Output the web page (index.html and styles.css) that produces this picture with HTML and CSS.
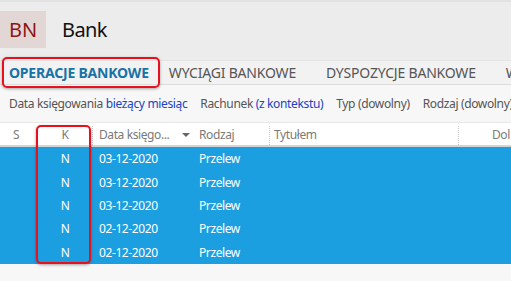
FILE: index.html
```html
<!DOCTYPE html>
<html lang="pl">
<head>
<meta charset="utf-8">
<link rel="stylesheet" href="styles.css">
</head>
<body>
<div class="app">
  <header class="titlebar">
    <div class="badge">BN</div>
    <div class="title">Bank</div>
  </header>
  <nav class="tabs">
    <div class="tab active">OPERACJE BANKOWE</div>
    <div class="tab">WYCIĄGI BANKOWE</div>
    <div class="tab">DYSPOZYCJE BANKOWE</div>
    <div class="tab">W</div>
  </nav>
  <div class="filters">
    <span class="f"><span class="lbl">Data księgowania</span> <span class="val">bieżący miesiąc</span></span>
    <span class="f"><span class="lbl">Rachunek</span> <span class="val">(z kontekstu)</span></span>
    <span class="f"><span class="lbl">Typ (dowolny)</span></span>
    <span class="f"><span class="lbl">Rodzaj (dowolny)</span></span>
  </div>
  <div class="grid">
    <div class="row head">
      <div class="c cs">S</div>
      <div class="c ck">K</div>
      <div class="c cd sep">Data księgo...<span class="arrow"></span></div>
      <div class="c cr">Rodzaj</div>
      <div class="c ct sep">Tytułem</div>
      <div class="c ca sep">Dol</div>
    </div>
    <div class="row sel"><div class="c cs"></div><div class="c ck">N</div><div class="c cd">03-12-2020</div><div class="c cr">Przelew</div><div class="c ct"></div><div class="c ca"></div></div>
    <div class="row sel"><div class="c cs"></div><div class="c ck">N</div><div class="c cd">03-12-2020</div><div class="c cr">Przelew</div><div class="c ct"></div><div class="c ca"></div></div>
    <div class="row sel"><div class="c cs"></div><div class="c ck">N</div><div class="c cd">03-12-2020</div><div class="c cr">Przelew</div><div class="c ct"></div><div class="c ca"></div></div>
    <div class="row sel"><div class="c cs"></div><div class="c ck">N</div><div class="c cd">02-12-2020</div><div class="c cr">Przelew</div><div class="c ct"></div><div class="c ca"></div></div>
    <div class="row sel"><div class="c cs"></div><div class="c ck">N</div><div class="c cd">02-12-2020</div><div class="c cr">Przelew</div><div class="c ct"></div><div class="c ca"></div></div>
  </div>
  <div class="mark mark-tab"></div>
  <div class="mark mark-col"></div>
</div>
</body>
</html>
```

FILE: styles.css
```css
* { box-sizing: border-box; }
html, body { margin: 0; padding: 0; }
body {
  width: 511px;
  height: 281px;
  overflow: hidden;
  background: #f7f7f7;
  font-family: "Noto Sans", "Open Sans", sans-serif;
}
.app { position: relative; width: 511px; height: 281px; }
.titlebar {
  height: 60px;
  background: #ececec;
  border-top: 2px solid #e2e2e2;
  display: flex;
  align-items: flex-start;
  padding-top: 9px;
}
.badge {
  width: 46px;
  height: 37px;
  background: #e3d7d6;
  color: #8e1516;
  font-size: 20px;
  display: flex;
  align-items: center;
  justify-content: center;
}
.title {
  margin-left: 16px;
  height: 37px;
  display: flex;
  align-items: center;
  font-size: 20px;
  letter-spacing: -0.6px;
  color: #111;
}
.tabs {
  height: 25px;
  background: #f2f2f2;
  border-top: 1px solid #e4e4e4;
  border-bottom: 1px solid #dcdcdc;
  display: flex;
  align-items: center;
  white-space: nowrap;
  overflow: hidden;
}
.tab {
  font-size: 14px;
  color: #555;
  padding: 0 0 0 9px;
  margin-right: 21px;
  letter-spacing: -0.2px;
}
.tab.active { color: #1773a6; font-weight: 700; margin-right: 11px; }
.filters {
  height: 38px;
  background: #f7f7f7;
  display: flex;
  align-items: center;
  padding-left: 9px;
  gap: 13px;
  font-size: 12px;
  letter-spacing: -0.35px;
  white-space: nowrap;
  overflow: hidden;
  border-bottom: 1px solid #e8e8e8;
}
.lbl { color: #555; }
.val { color: #2042c4; }
.grid { background: #f7f7f7; }
.row { display: flex; letter-spacing: -0.4px; }
.row.head {
  height: 24px;
  background: #fff;
  border-bottom: 2px solid #d4d4d4;
  color: #7a7a7a;
  font-size: 12px;
}
.row.sel {
  height: 23.4px;
  background: #1c9fe0;
  color: #fff;
  font-size: 12px;
}
.c { display: flex; align-items: center; white-space: nowrap; position: relative; }
.cs { width: 36px; justify-content: center; padding-right: 4px; }
.ck { width: 56px; justify-content: center; padding-left: 2px; }
.cd { width: 107px; padding-left: 7px; }
.cr { width: 70px; padding-left: 0; }
.ct { width: 189px; padding-left: 5px; }
.ca { flex: 1; padding-left: 34px; }
.head .sep::before {
  content: "";
  position: absolute;
  left: 0;
  top: 3px;
  bottom: 0;
  border-left: 1px dotted #c8c8c8;
}
.arrow {
  position: absolute;
  left: 90px;
  top: 10px;
  width: 0;
  height: 0;
  border-left: 4px solid transparent;
  border-right: 4px solid transparent;
  border-top: 4px solid #666;
}
.mark {
  position: absolute;
  border: 2px solid #e8101c;
  border-radius: 5px;
  box-shadow: 0 1px 3px rgba(0,0,0,0.35);
}
.mark-tab { left: 2px; top: 57px; width: 158px; height: 31px; }
.mark-col { left: 36px; top: 125px; width: 55px; height: 139px; }
```
